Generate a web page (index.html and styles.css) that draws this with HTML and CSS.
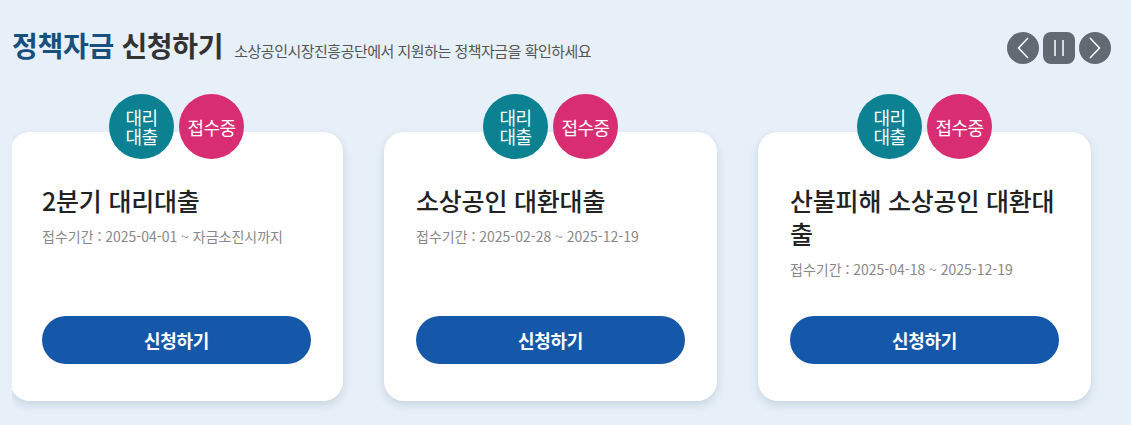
FILE: index.html
```html
<!DOCTYPE html>
<html lang="ko">
<head>
<meta charset="utf-8">
<title>정책자금 신청하기</title>
<link rel="stylesheet" href="styles.css">
</head>
<body>
<div class="page">
  <header class="header">
    <div class="heading">
      <h1 class="title"><span class="title-accent">정책자금</span> 신청하기</h1>
      <p class="subtitle">소상공인시장진흥공단에서 지원하는 정책자금을 확인하세요</p>
    </div>
    <div class="controls">
      <button class="ctrl ctrl-round" aria-label="이전">
        <svg width="12" height="22" viewBox="0 0 12 22"><path d="M11 1 L1.5 11 L11 21" fill="none" stroke="#fff" stroke-width="1.5"/></svg>
      </button>
      <button class="ctrl ctrl-square" aria-label="정지">
        <svg width="12" height="18" viewBox="0 0 12 18"><path d="M2 1 V17 M10 1 V17" fill="none" stroke="#fff" stroke-width="1.5"/></svg>
      </button>
      <button class="ctrl ctrl-round" aria-label="다음">
        <svg width="12" height="22" viewBox="0 0 12 22"><path d="M1 1 L10.5 11 L1 21" fill="none" stroke="#fff" stroke-width="1.5"/></svg>
      </button>
    </div>
  </header>

  <div class="slider">
    <div class="track">
      <div class="slide">
        <div class="badges">
          <span class="badge badge-type"><span class="badge-line">대리</span><span class="badge-line">대출</span></span>
          <span class="badge badge-status">접수중</span>
        </div>
        <div class="card">
          <h2 class="card-title">2분기 대리대출</h2>
          <p class="card-period">접수기간 : 2025-04-01 ~ 자금소진시까지</p>
          <a class="card-btn" href="#">신청하기</a>
        </div>
      </div>
      <div class="slide">
        <div class="badges">
          <span class="badge badge-type"><span class="badge-line">대리</span><span class="badge-line">대출</span></span>
          <span class="badge badge-status">접수중</span>
        </div>
        <div class="card">
          <h2 class="card-title">소상공인 대환대출</h2>
          <p class="card-period">접수기간 : 2025-02-28 ~ 2025-12-19</p>
          <a class="card-btn" href="#">신청하기</a>
        </div>
      </div>
      <div class="slide">
        <div class="badges">
          <span class="badge badge-type"><span class="badge-line">대리</span><span class="badge-line">대출</span></span>
          <span class="badge badge-status">접수중</span>
        </div>
        <div class="card">
          <h2 class="card-title">산불피해 소상공인 대환대출</h2>
          <p class="card-period">접수기간 : 2025-04-18 ~ 2025-12-19</p>
          <a class="card-btn" href="#">신청하기</a>
        </div>
      </div>
    </div>
  </div>
</div>
</body>
</html>
```

FILE: styles.css
```css
* { box-sizing: border-box; }

html, body {
  margin: 0;
  padding: 0;
}

body {
  background: #e7f0f8;
  font-family: "Noto Sans CJK KR", "Noto Sans", sans-serif;
  color: #222;
  width: 1131px;
  height: 425px;
  overflow: hidden;
}

.page {
  width: 1131px;
}

.header {
  display: flex;
  justify-content: space-between;
  align-items: center;
  height: 32px;
  margin-top: 32px;
  padding: 0 20px 0 12px;
}

.heading {
  display: flex;
  align-items: baseline;
  gap: 11px;
  margin-top: -6px;
}

.title {
  margin: 0;
  font-size: 28px;
  line-height: 32px;
  font-weight: 700;
  letter-spacing: -0.3px;
  color: #333;
}

.title-accent {
  color: #17507e;
}

.subtitle {
  margin: 0;
  font-size: 15px;
  line-height: 20px;
  letter-spacing: -0.5px;
  color: #555;
}

.controls {
  display: flex;
  gap: 4px;
}

.ctrl {
  width: 32px;
  height: 32px;
  border: 0;
  padding: 0;
  background: #616a73;
  display: flex;
  align-items: center;
  justify-content: center;
  cursor: pointer;
}

.ctrl-round { border-radius: 50%; }
.ctrl-square { border-radius: 8px; }

.slider {
  margin: 30px 0 0 12px;
  width: 1108px;
  overflow: hidden;
  padding-bottom: 20px;
}

.track {
  display: flex;
  gap: 41px;
  margin-left: -2px;
}

.slide {
  flex: 0 0 333px;
  display: flex;
  flex-direction: column;
}

.badges {
  display: flex;
  justify-content: center;
  gap: 5px;
  margin-bottom: -27px;
  position: relative;
  z-index: 1;
}

.badge {
  width: 65px;
  height: 65px;
  border-radius: 50%;
  display: flex;
  flex-direction: column;
  align-items: center;
  justify-content: center;
  text-align: center;
  color: #fff;
  font-size: 18px;
  line-height: 20px;
  letter-spacing: -0.5px;
  font-weight: 400;
}

.badge-line {
  display: block;
  height: 19px;
  line-height: 19px;
}

.badge-type { background: #0b8192; }
.badge-status { background: #d82d72; }

.card {
  height: 269px;
  background: #fff;
  border-radius: 20px;
  padding: 52px 32px 37px;
  display: flex;
  flex-direction: column;
  box-shadow: 0 4px 10px rgba(40, 70, 110, 0.16);
}

.card-title {
  margin: 0;
  font-size: 25px;
  line-height: 33px;
  font-weight: 500;
  letter-spacing: -0.2px;
  color: #222;
}

.card-period {
  margin: 9px 0 0;
  font-size: 14px;
  line-height: 20px;
  letter-spacing: 0;
  color: #888;
}

.card-btn {
  margin-top: auto;
  height: 48px;
  border-radius: 24px;
  background: #1557a9;
  color: #fff;
  text-decoration: none;
  display: flex;
  align-items: center;
  justify-content: center;
  font-size: 18px;
  font-weight: 700;
  letter-spacing: -0.3px;
}
```
